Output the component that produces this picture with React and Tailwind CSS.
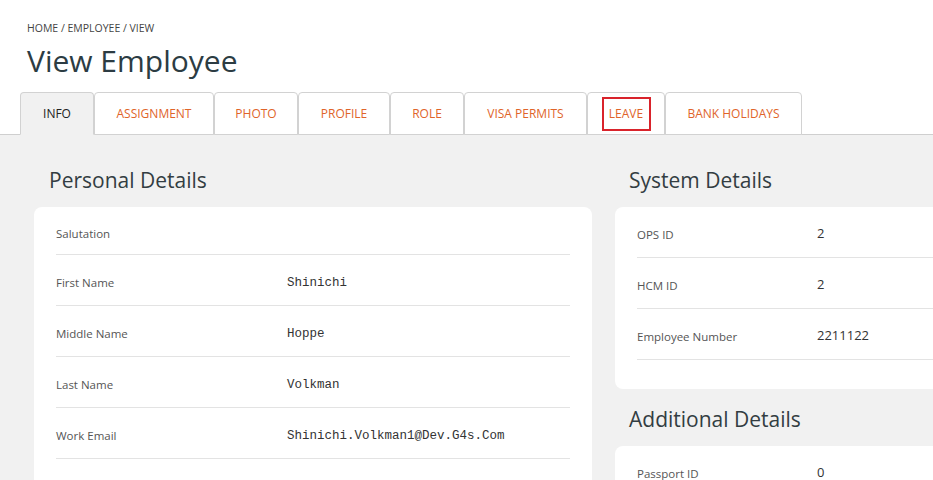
import React from "react";

const tabs = [
  { name: "INFO", w: "w-[74px]", active: true },
  { name: "ASSIGNMENT", w: "w-[120px]" },
  { name: "PHOTO", w: "w-[84px]" },
  { name: "PROFILE", w: "w-[92px]" },
  { name: "ROLE", w: "w-[74px]" },
  { name: "VISA PERMITS", w: "w-[123px]" },
  { name: "LEAVE", w: "w-[78px]", boxed: true },
  { name: "BANK HOLIDAYS", w: "w-[137px]" },
];

const personal = [
  ["Salutation", ""],
  ["First Name", "Shinichi"],
  ["Middle Name", "Hoppe"],
  ["Last Name", "Volkman"],
  ["Work Email", "Shinichi.Volkman1@Dev.G4s.Com"],
  ["Phone", ""],
];

const system = [
  ["OPS ID", "2"],
  ["HCM ID", "2"],
  ["Employee Number", "2211122"],
];

function Row({ label, value, mono, h, valueX }) {
  return (
    <div className={`flex items-center border-b border-[#e3e3e3] pt-[6px] ${h}`}>
      <div className={`${valueX} shrink-0 text-[11.5px] text-[#555]`}>{label}</div>
      <div
        className={
          mono
            ? "text-[12.5px] text-[#333] font-['Liberation_Mono',monospace]"
            : "-mt-[2px] text-[13px] text-[#333]"
        }
      >
        {value}
      </div>
    </div>
  );
}

export default function App() {
  return (
    <div className="w-[933px] h-[480px] overflow-hidden bg-white font-['Open_Sans',sans-serif]">
      <div className="pl-[27px] pt-[20px]">
        <div className="text-[10.5px] leading-[16px] text-[#444]">HOME / EMPLOYEE / VIEW</div>
        <h1 className="mt-[5px] text-[30px] leading-[40px] text-[#2c3c43]">View Employee</h1>
      </div>
      <div className="mt-[11px] flex border-b border-[#cfcfcf] pl-[20px]">
        {tabs.map((t) => (
          <div
            key={t.name}
            className={`${t.w} -mb-px flex h-[43px] items-center justify-center rounded-t-[4px] border border-[#d2d2d2] text-[12px] ${
              t.active
                ? "border-b-[#f1f1f1] bg-[#f1f1f1] text-[#222]"
                : "bg-white text-[#e0642a]"
            }`}
          >
            {t.boxed ? (
              <span className="flex h-[34px] w-[49px] items-center justify-center border-[2.5px] border-[#d9232b]">
                {t.name}
              </span>
            ) : (
              t.name
            )}
          </div>
        ))}
      </div>
      <div className="flex h-full bg-[#f1f1f1] pl-[34px] pt-[30px]">
        <div className="w-[558px] shrink-0">
          <h2 className="pl-[15px] text-[21px] leading-[30px] text-[#333d42]">Personal Details</h2>
          <div className="mt-[12px] rounded-[8px] bg-white px-[22px]">
            {personal.map(([l, v], i) => (
              <Row
                key={l}
                label={l}
                value={v}
                mono
                h={i === 0 ? "h-[48px]" : "h-[51px]"}
                valueX="w-[231px]"
              />
            ))}
          </div>
        </div>
        <div className="ml-[23px] w-[558px] shrink-0">
          <h2 className="pl-[14px] text-[21px] leading-[30px] text-[#333d42]">System Details</h2>
          <div className="mt-[12px] rounded-[8px] bg-white px-[22px] pb-[29px]">
            {system.map(([l, v]) => (
              <Row key={l} label={l} value={v} h="h-[51px]" valueX="w-[180px]" />
            ))}
          </div>
          <h2 className="mt-[15px] pl-[14px] text-[21px] leading-[30px] text-[#333d42]">Additional Details</h2>
          <div className="mt-[12px] rounded-[8px] bg-white px-[22px]">
            <Row label="Passport ID" value="0" h="h-[51px]" valueX="w-[180px]" />
          </div>
        </div>
      </div>
    </div>
  );
}
